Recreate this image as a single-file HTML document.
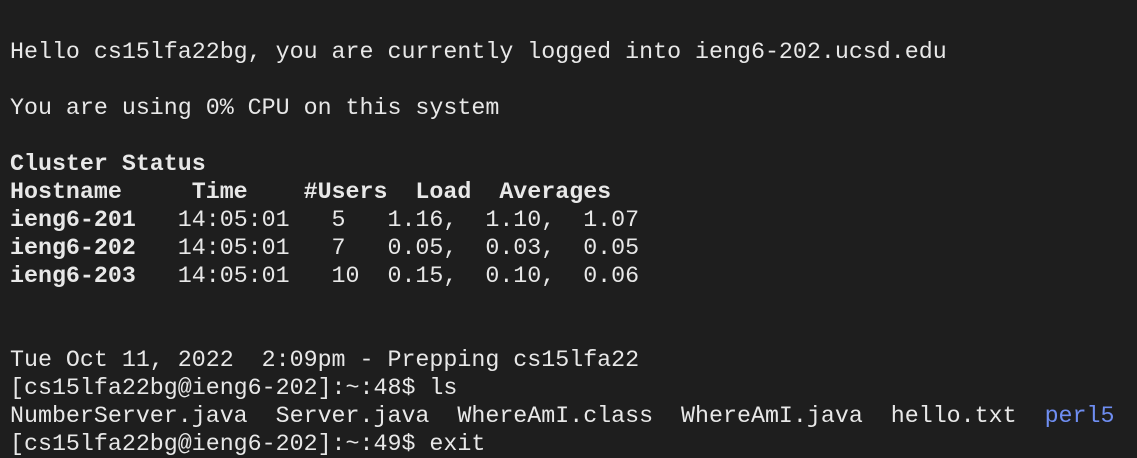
<!DOCTYPE html>
<html><head><style>
html,body{margin:0;padding:0;background:#1e1e1e;width:1137px;height:437px;overflow:hidden}
pre{margin:0;position:absolute;left:10px;top:38px;font-family:"Liberation Mono",monospace;font-size:23.3px;line-height:28px;color:#e8e8e8}
b{font-weight:bold}
.p{color:#6f8ef2}
</style></head><body>
<pre>Hello cs15lfa22bg, you are currently logged into ieng6-202.ucsd.edu

You are using 0% CPU on this system

<b>Cluster Status</b>
<b>Hostname     Time    #Users  Load  Averages</b>
<b>ieng6-201</b>   14:05:01   5   1.16,  1.10,  1.07
<b>ieng6-202</b>   14:05:01   7   0.05,  0.03,  0.05
<b>ieng6-203</b>   14:05:01   10  0.15,  0.10,  0.06


Tue Oct 11, 2022  2:09pm - Prepping cs15lfa22
[cs15lfa22bg@ieng6-202]:~:48$ ls
NumberServer.java  Server.java  WhereAmI.class  WhereAmI.java  hello.txt  <span class="p">perl5</span>
[cs15lfa22bg@ieng6-202]:~:49$ exit</pre>
</body></html>
